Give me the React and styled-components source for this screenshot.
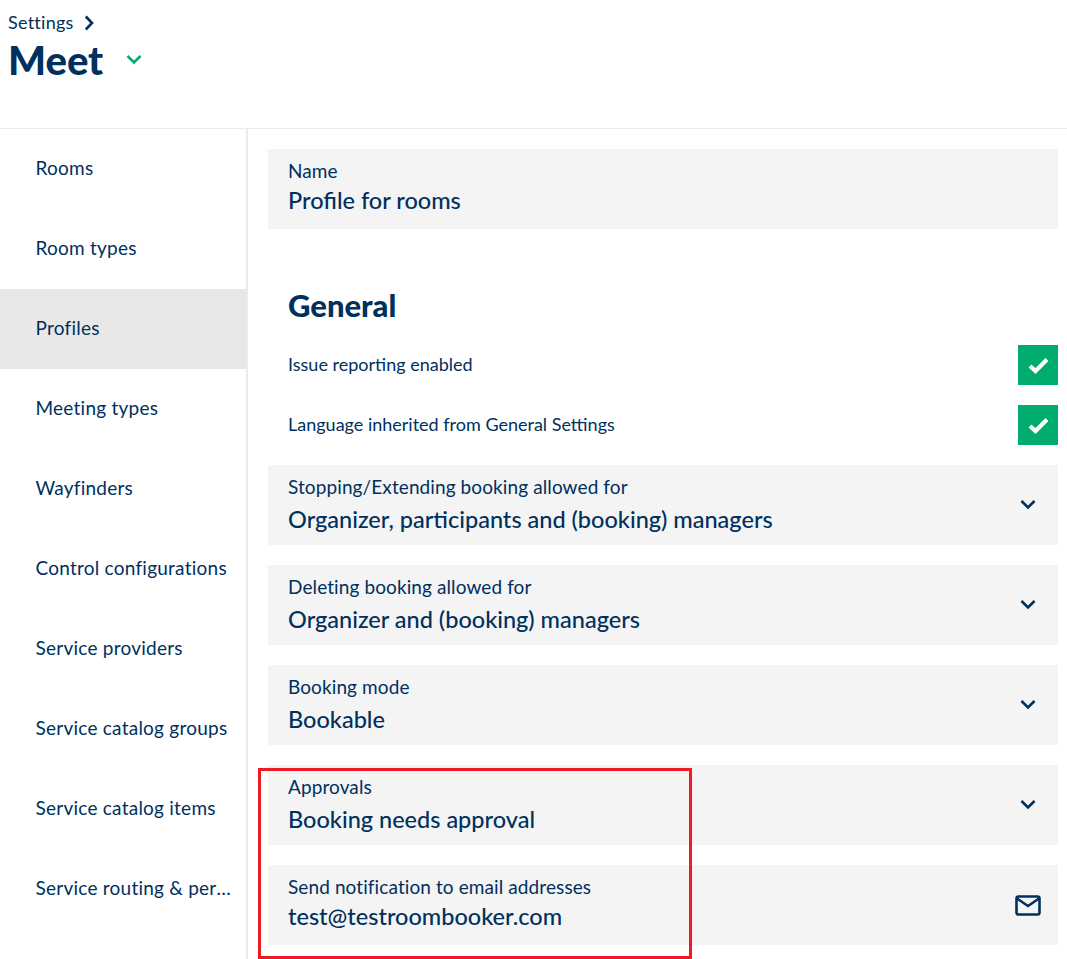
import React from "react";
import styled, { createGlobalStyle } from "styled-components";

const Global = createGlobalStyle`
  html, body { margin: 0; padding: 0; background: #fff; }
  body { font-family: Lato, "Open Sans", sans-serif; color: #00305e; overflow: hidden; }
`;
const Page = styled.div`position: relative; width: 1067px; height: 959px; overflow: hidden;`;
const Header = styled.header`height: 129px; box-sizing: border-box; padding: 12px 8px 0; border-bottom: 1px solid #ebebeb;`;
const Crumb = styled.div`display: flex; align-items: center; gap: 10px; font-size: 18px; letter-spacing: 0.25px; line-height: 21px;`;
const TitleRow = styled.div`display: flex; align-items: center; gap: 23px; margin-top: 4px;`;
const Title = styled.h1`margin: 0; font-size: 40px; line-height: 46px; font-weight: 900;`;
const Body = styled.div`display: flex; height: 830px;`;
const Side = styled.nav`width: 248px; flex: none; box-sizing: border-box; border-right: 2px solid #ebebeb;`;
const SideItem = styled.div`
  height: 80px; line-height: 78px; padding-left: 35.5px; font-size: 19px; letter-spacing: 0.24px;
  white-space: nowrap; overflow: hidden; text-overflow: ellipsis; box-sizing: border-box;
  background: ${p => (p.$active ? "#e8e8e8" : "transparent")};
`;
const Main = styled.main`flex: 1; padding: 20px 9px 0 20px; display: flex; flex-direction: column;`;
const Field = styled.div`
  height: 80px; flex: none; background: #f4f4f4; display: flex; align-items: center; justify-content: space-between;
  padding: 0 20px; box-sizing: border-box; margin-bottom: 20px;
`;
const FieldText = styled.div`display: flex; flex-direction: column; margin-bottom: ${p => (p.$tight ? 4 : 1)}px;`;
const Label = styled.div`font-size: 19px; letter-spacing: 0.1px; line-height: 24px;`;
const Value = styled.div`font-size: 23.5px; line-height: 30px; font-weight: 500; margin-top: ${p => (p.$tight ? 2 : 5)}px;`;
const Heading = styled.h2`margin: 36px 0 20px 20px; font-size: 31px; line-height: 40px; font-weight: 900;`;
const CheckRow = styled.div`height: 40px; display: flex; align-items: center; justify-content: space-between; padding-left: 20px; margin-bottom: 20px; font-size: 18px;`;
const CheckLabel = styled.span`margin-bottom: 2px;`;
const CheckBox = styled.div`width: 40px; height: 40px; background: #00ac6e; display: flex; align-items: center; justify-content: center;`;
const Annotation = styled.div`position: absolute; left: 258px; top: 768px; width: 434px; height: 191px; box-sizing: border-box; border: 3px solid #ed1c24; pointer-events: none;`;
const ChevronSvg = styled.svg`flex: none; margin-right: ${p => p.$inset}px; margin-bottom: 1px;`;
const MailSvg = styled.svg`flex: none; margin-right: -3px;`;

const Chevron = ({ color = "#00305e", inset = 2 }) => (
  <ChevronSvg $inset={inset} width="16" height="11" viewBox="0 0 16 11" fill="none"><path d="M1.5 2 8 8.5 14.5 2" stroke={color} strokeWidth="2.6" /></ChevronSvg>
);
const Check = () => (
  <svg width="21" height="17" viewBox="0 0 21 17" fill="none"><path d="M2 9 7.5 14 19 2.5" stroke="#fff" strokeWidth="4.2" /></svg>
);
const Mail = () => (
  <MailSvg width="26" height="21" viewBox="0 0 26 21" fill="none" stroke="#00305e" strokeWidth="2.6">
    <rect x="1.5" y="1.5" width="23" height="18" rx="2" /><path d="M2 3.5 13 11 24 3.5" />
  </MailSvg>
);
const items = ["Rooms","Room types","Profiles","Meeting types","Wayfinders","Control configurations","Service providers","Service catalog groups","Service catalog items","Service routing & permissions"];
const selects = [
  ["Stopping/Extending booking allowed for","Organizer, participants and (booking) managers"],
  ["Deleting booking allowed for","Organizer and (booking) managers"],
  ["Booking mode","Bookable"],
  ["Approvals","Booking needs approval"],
];
export default function App() {
  return (
    <Page>
      <Global />
      <Header>
        <Crumb>Settings
          <svg width="10" height="16" viewBox="0 0 10 16" fill="none"><path d="M1.8 1.5 8 8 1.8 14.5" stroke="#00305e" strokeWidth="2.6" /></svg>
        </Crumb>
        <TitleRow><Title>Meet</Title><Chevron color="#00ac6e" inset={0} /></TitleRow>
      </Header>
      <Body>
        <Side>{items.map(i => <SideItem key={i} $active={i === "Profiles"}>{i}</SideItem>)}</Side>
        <Main>
          <Field><FieldText $tight><Label>Name</Label><Value $tight>Profile for rooms</Value></FieldText></Field>
          <Heading>General</Heading>
          <CheckRow><CheckLabel>Issue reporting enabled</CheckLabel><CheckBox><Check /></CheckBox></CheckRow>
          <CheckRow><CheckLabel>Language inherited from General Settings</CheckLabel><CheckBox><Check /></CheckBox></CheckRow>
          {selects.map(([l, v]) => (
            <Field key={l}><FieldText><Label>{l}</Label><Value>{v}</Value></FieldText><Chevron /></Field>
          ))}
          <Field><FieldText $tight><Label>Send notification to email addresses</Label><Value $tight>test@testroombooker.com</Value></FieldText><Mail /></Field>
        </Main>
      </Body>
      <Annotation />
    </Page>
  );
}
